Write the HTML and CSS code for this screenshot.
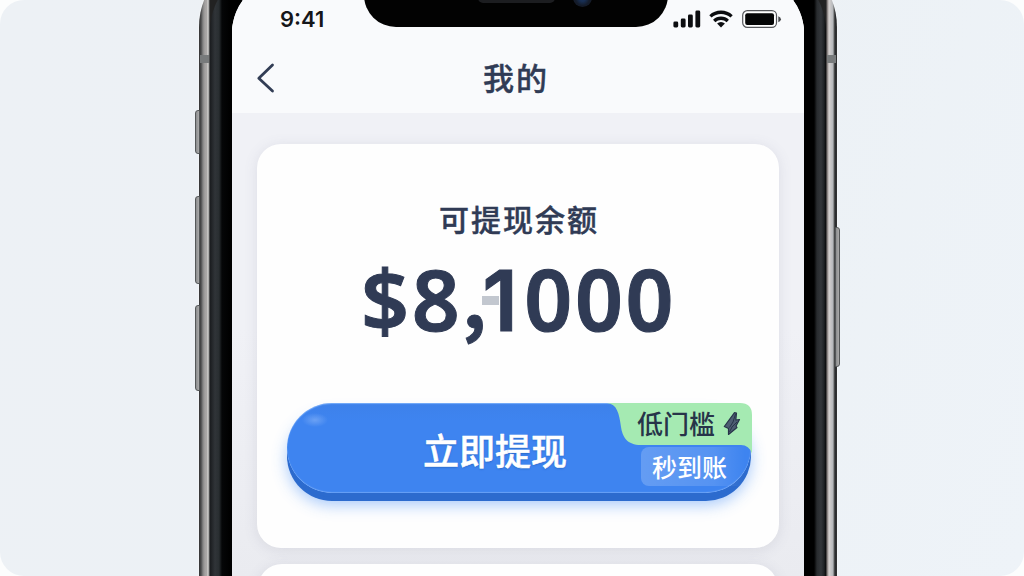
FILE: index.html
```html
<!DOCTYPE html>
<html lang="zh-CN">
<head>
    <meta charset="UTF-8">
    <meta name="viewport" content="width=device-width, initial-scale=1.0">
    <title>我的</title>
    <link rel="stylesheet" href="styles.css">
</head>
<body>
    <main class="stage">
        <div class="phone">
            <!-- Side buttons and antenna bands -->
            <span class="side-btn mute"></span>
            <span class="side-btn vol-up"></span>
            <span class="side-btn vol-down"></span>
            <span class="side-btn power"></span>
            <span class="antenna left"></span>
            <span class="antenna right"></span>

            <div class="bezel">
                <div class="screen">
                    <div class="notch">
                        <span class="speaker"></span>
                        <span class="camera"></span>
                    </div>

                    <header class="top">
                        <div class="status-bar">
                            <span class="time">9:41</span>
                            <div class="status-icons">
                                <svg width="28" height="18" viewBox="0 0 28 18" fill="#0c0d10">
                                    <rect x="0.4" y="11.5" width="4.8" height="6" rx="1.4"/>
                                    <rect x="7.8" y="8.6" width="4.8" height="8.9" rx="1.4"/>
                                    <rect x="15" y="4.6" width="4.8" height="12.9" rx="1.4"/>
                                    <rect x="22.4" y="0.6" width="4.8" height="16.9" rx="1.4"/>
                                </svg>
                                <svg class="wifi" width="24" height="18" viewBox="0 0 24 18">
                                    <g fill="none" stroke="#0c0d10" stroke-width="3.3">
                                        <path d="M1.4 6.4a15.6 15.6 0 0 1 21.2 0"/>
                                        <path d="M5.2 11a9.8 9.8 0 0 1 13.6 0"/>
                                    </g>
                                    <path d="M12 17.5l-3.9-4.1a5.8 5.8 0 0 1 7.8 0z" fill="#0c0d10"/>
                                </svg>
                                <svg class="battery" width="40" height="18" viewBox="0 0 40 18">
                                    <rect x="0.7" y="0.7" width="33.8" height="16.6" rx="4.6" fill="#fff" stroke="#55565a" stroke-width="1.2"/>
                                    <rect x="3.2" y="3.2" width="28.8" height="11.8" rx="2" fill="#050506"/>
                                    <path d="M36.3 6.2q2.6 1 2.6 3t-2.6 3z" fill="#45464a"/>
                                </svg>
                            </div>
                        </div>
                        <nav class="nav-bar">
                            <svg class="back" width="20" height="30" viewBox="0 0 20 30">
                                <path d="M16.5 2L2.8 15.2L16.5 28" fill="none" stroke="#323d55" stroke-width="2.8" stroke-linecap="round" stroke-linejoin="round"/>
                            </svg>
                            <h1>我的</h1>
                        </nav>
                    </header>

                    <section class="card balance-card">
                        <p class="label">可提现余额</p>
                        <p class="amount">$8<span class="comma">,</span><span class="one">1</span>000</p>
                        <div class="action">
                            <button class="withdraw">立即提现</button>
                            <div class="badge">
                                <svg class="badge-shape" width="146" height="52" viewBox="0 0 146 52">
                                    <path d="M0 0H133Q145 0 145 12V50.5Q142 42 134 42H34C20 42 15.5 34 14 24C12 10 10 1 0 0Z" fill="#a5eab2"/>
                                </svg>
                                <span class="badge-text">低门槛</span>
                                <svg class="bolt" width="18" height="24" viewBox="0 0 18 24">
                                    <path d="M11.5 0.7L1.3 14.5L5.5 16.5L5.5 22.5L14 15.5L13 14L16.5 7.5L12.8 8L13.5 1Z" fill="#4d5d72" stroke="#273449" stroke-width="1.2" stroke-linejoin="round"/>
                                    <path d="M12.5 2L10 10L6.5 15.5M14 10L9 15L6.5 20" fill="none" stroke="#273449" stroke-width="1"/>
                                </svg>
                            </div>
                            <span class="speed">秒到账</span>
                        </div>
                    </section>

                    <section class="card next-card"></section>
                </div>
            </div>
        </div>
    </main>
</body>
</html>
```
FILE: styles.css
```css
:root {
    --ink: #303b55;
    --blue: #3e84f0;
    --blue-dark: #2c6bce;
}

* {
    box-sizing: border-box;
}

body {
    margin: 0;
    background: #fcfdfd;
    font-family: "Noto Sans", "Noto Sans CJK SC", sans-serif;
    color: var(--ink);
}

h1,
p {
    margin: 0;
}

.stage {
    width: 1024px;
    height: 576px;
    border-radius: 24px;
    overflow: hidden;
    background: linear-gradient(110deg, #edf1f5, #ecf1f5 60%, #eef3f8);
}

.phone {
    position: relative;
    width: 638px;
    height: 800px;
    margin: -47px 0 0 199px;
    padding: 12px 11px;
    border-radius: 74px;
    background: linear-gradient(to right, #333 0, #4a4b4c 2px, #858585 4px, #a4a2a1 6px, #aaa8a7 8px, #deddda 9px, #77797a 10px, #222 11px, #222 627px, #77706f 628px, #d5d1d0 630px, #b3b6ba 634px, #656665 635px, #282b2e 636px, #333 638px);
    box-shadow: 0 0 2px #fff;
}

.bezel {
    height: 100%;
    padding: 13px 22px 0;
    border-radius: 66px;
    background: linear-gradient(to right, #1a1c1f 0, #303438 5px, #292e31 9px, #050607 12px, #000 20px, #000 604px, #292c2f 607px, #33363a 611px, #202326 614px, #08090a 616px);
}

.screen {
    position: relative;
    height: 100%;
    padding-top: 22px;
    border-radius: 55px 55px 0 0;
    overflow: hidden;
    background: linear-gradient(to bottom, #f0f1f6 0, #f0f1f6 350px, #eaebf0 600px);
}

/* Hardware details */
.side-btn {
    position: absolute;
    left: -4px;
    width: 5px;
    border: 1px solid #555859;
    border-radius: 3px 0 0 3px;
    background: linear-gradient(to right, #8b8d8e, #aaa);
}

.mute {
    top: 157px;
    height: 44px;
}

.vol-up {
    top: 243px;
    height: 88px;
}

.vol-down {
    top: 352px;
    height: 86px;
}

.power {
    top: 274px;
    left: 636px;
    height: 140px;
    border-radius: 0 3px 3px 0;
}

.antenna {
    position: absolute;
    top: 102px;
    width: 9px;
    height: 8px;
    background: #777a7b;
}

.antenna.left {
    left: 1px;
}

.antenna.right {
    right: 1px;
}

.notch {
    position: absolute;
    top: 0;
    left: 132px;
    width: 304px;
    height: 49px;
    border-radius: 0 0 32px 32px;
    background: #020202;
}

.speaker {
    position: absolute;
    left: 114px;
    top: 12px;
    width: 77px;
    height: 13px;
    border-radius: 0 0 5px 5px;
    background: #1c1d20;
}

.camera {
    position: absolute;
    left: 209px;
    top: 10px;
    width: 19px;
    height: 19px;
    border-radius: 50%;
    background: radial-gradient(circle at 50% 55%, #182f54 0 20%, #141b29 50%);
}

/* Status bar and title */
.top {
    height: 113px;
    background: #f9fafc;
    box-shadow: 0 -22px 0 #f9fafc;
}

.status-bar {
    display: flex;
    justify-content: space-between;
    height: 38px;
    padding: 10px 22px 0 48px;
}

.time {
    margin-top: -1px;
    font: 600 22px/20px Inter, sans-serif;
    color: #15161a;
}

.status-icons {
    display: flex;
    gap: 8px;
}

.battery {
    margin-left: 1px;
}

.nav-bar {
    display: grid;
    grid-template-columns: 60px 1fr 60px;
    align-items: center;
    height: 80px;
}

.back {
    margin-left: 24px;
}

.nav-bar h1 {
    padding: 0 4px 4px 0;
    font-size: 31px;
    font-weight: 500;
    letter-spacing: 2px;
    text-align: center;
    -webkit-text-stroke: 0.4px var(--ink);
}

/* Cards */
.card {
    background: #fefefe;
    border-radius: 24px;
    box-shadow: 0 2px 14px rgba(90, 95, 125, 0.13);
}

.balance-card {
    width: 522px;
    height: 404px;
    margin: 31px 0 0 25px;
    padding: 53px 28px 0 30px;
}

.label {
    height: 45px;
    font-size: 30px;
    font-weight: 500;
    line-height: 46px;
    letter-spacing: 2px;
    text-align: center;
    -webkit-text-stroke: 0.4px var(--ink);
}

.amount {
    height: 161px;
    padding-left: 74px;
    font-size: 84px;
    font-weight: 600;
    line-height: 114px;
    letter-spacing: 2.6px;
    white-space: nowrap;
    -webkit-text-stroke: 1px var(--ink);
}

.comma {
    display: inline-block;
    width: 20px;
    font-family: "Noto Sans CJK SC", sans-serif;
    font-size: 74px;
    font-weight: 700;
    line-height: 1;
    letter-spacing: 0;
    transform: translateY(-3px);
}

/* Faint bar behind the digit */
.one {
    display: inline-block;
    width: 42px;
    font-family: Inter, sans-serif;
    letter-spacing: 0;
    line-height: 1;
    background: linear-gradient(#c2c7cf, #c2c7cf) 0 37px / 17px 9px no-repeat;
}

.action {
    position: relative;
    height: 98px;
}

.withdraw {
    display: block;
    width: 464px;
    height: 90px;
    padding: 4px 48px 0 0;
    border: 0;
    border-radius: 45px;
    background: radial-gradient(ellipse 13px 7px at 28px 17px, #6ba1f4, transparent), linear-gradient(#3d81ea, var(--blue) 20%, var(--blue));
    box-shadow: inset 0 1px 1px #77adfa, inset 0 -1px 1px #69a1f5, 0 4px 0 var(--blue-dark), 0 8px 0 var(--blue-dark), 0 12px 15px rgba(63, 137, 247, 0.45);
    color: #fff;
    font-family: inherit;
    font-size: 36px;
    font-weight: 500;
    line-height: 90px;
    text-shadow: 0 1px 2px #2866c4;
    -webkit-text-stroke: 0.5px #fff;
}

.badge {
    position: absolute;
    top: 0;
    left: 320px;
    display: flex;
    align-items: center;
    gap: 8px;
    width: 146px;
    height: 42px;
    padding-left: 30px;
}

.badge-shape {
    position: absolute;
    top: 0;
    left: 0;
}

.badge-text {
    position: relative;
    font-size: 26px;
    font-weight: 500;
    line-height: 44px;
    color: #273449;
}

.bolt {
    position: relative;
    flex: none;
}

.speed {
    position: absolute;
    top: 44px;
    left: 354px;
    width: 104px;
    height: 39px;
    padding-left: 11px;
    border-radius: 8px 0 0 8px;
    background: linear-gradient(to right, rgba(255, 255, 255, 0.2), rgba(255, 255, 255, 0.12) 70%, transparent);
    color: #fff;
    font-size: 25px;
    font-weight: 500;
    line-height: 40px;
}

.next-card {
    width: 520px;
    height: 120px;
    margin: 16px 0 0 26px;
}
```
